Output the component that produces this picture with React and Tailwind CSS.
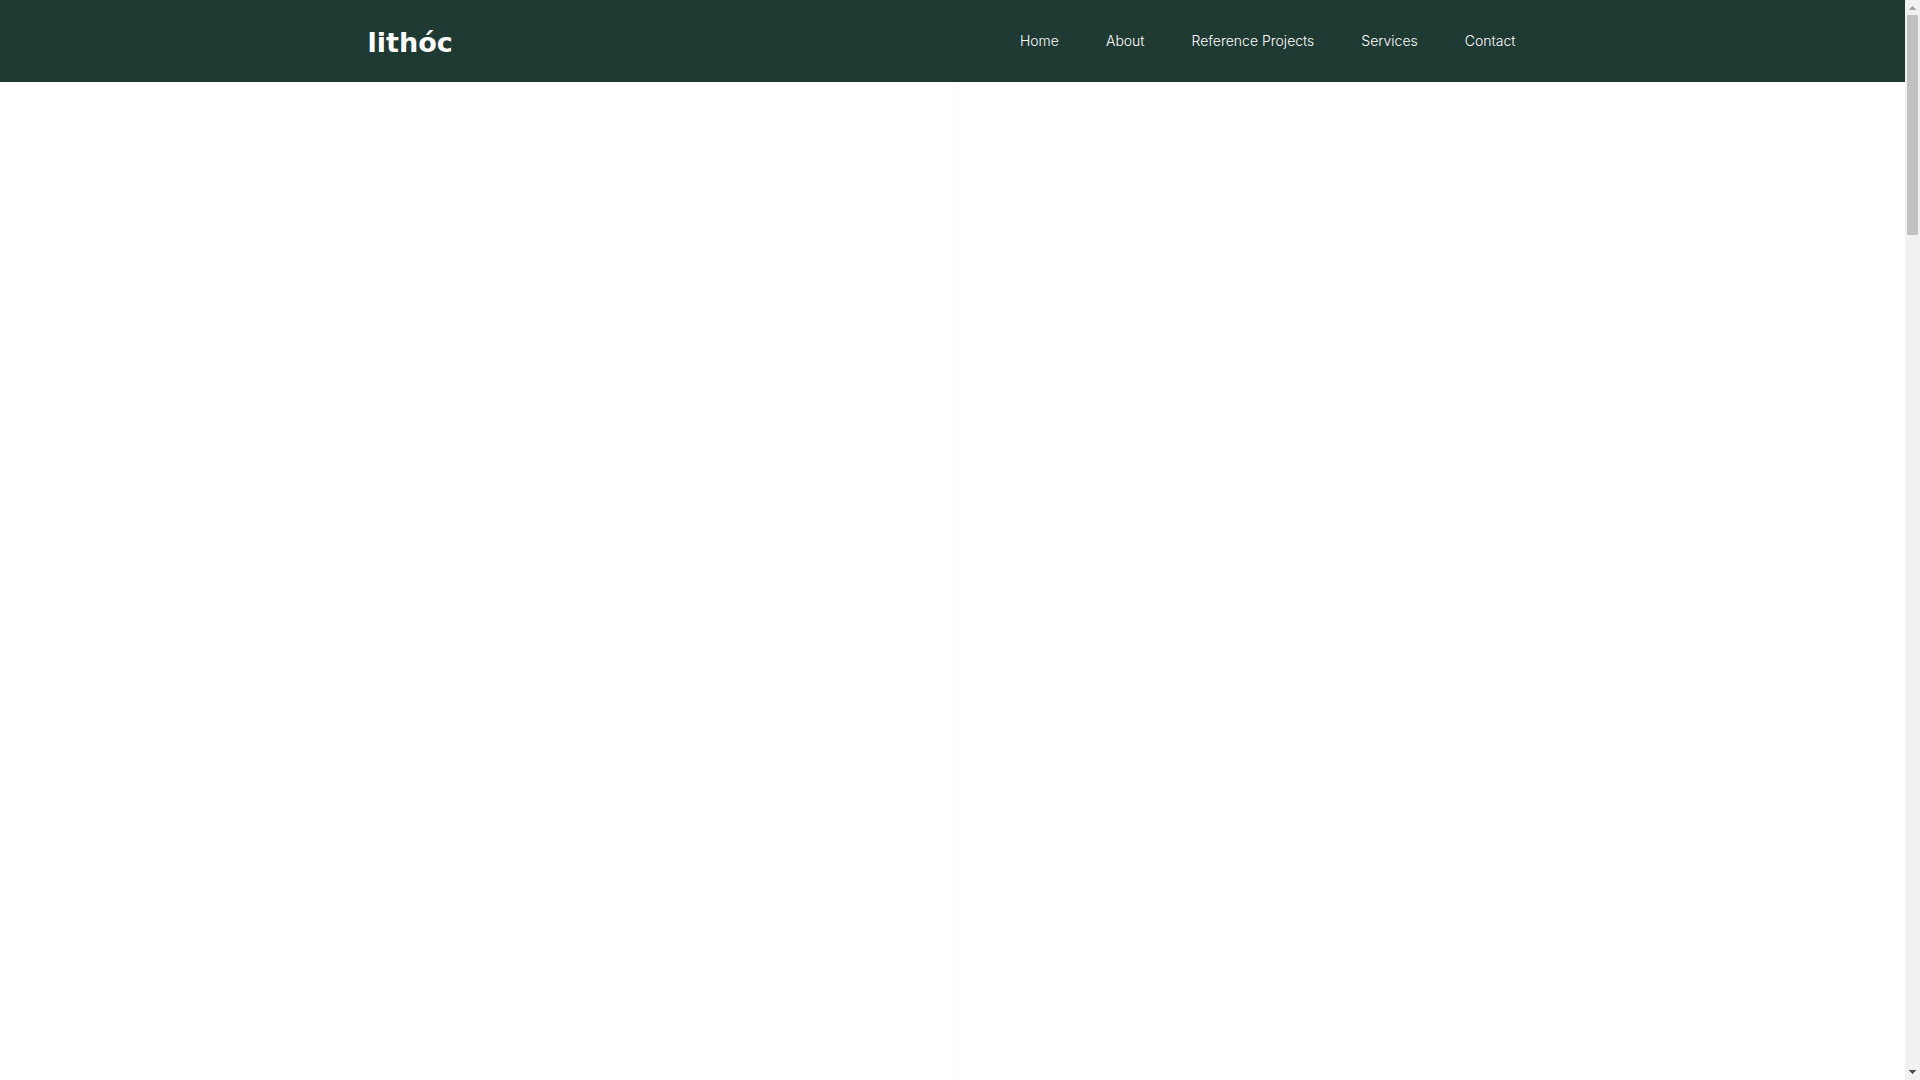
import React from 'react'

const navigation = [
  { name: 'Home', href: '#home' },
  { name: 'About', href: '#about' },
  { name: 'Reference Projects', href: '#projects' },
  { name: 'Services', href: '#services' },
  { name: 'Contact', href: '#contact' },
]

function Header() {
  return (
    <header className="bg-[#1f3933] border-b border-[#1b302c]">
      <div className="flex items-center justify-between w-full max-w-[1170px] mx-auto h-[81px] pr-[22px]">
        <a
          href="#home"
          className="pt-1 font-['DejaVu_Sans',sans-serif] font-bold text-[27px] leading-8 text-white"
        >
          lithóc
        </a>

        <nav className="flex items-center gap-[47px]">
          {navigation.map((item) => (
            <a key={item.name} href={item.href} className="text-sm font-light text-white">
              {item.name}
            </a>
          ))}
        </nav>
      </div>
    </header>
  )
}

function ScrollRail() {
  return (
    <div className="flex flex-col items-center w-[15px] bg-[#f1f1f1]" aria-hidden="true">
      <svg className="w-[15px] h-[15px]" viewBox="0 0 15 15" shapeRendering="crispEdges">
        <path d="M4 10V9h1V8h1V7h1V6h1v1h1v1h1v1h1v1z" fill="#a3a3a3" />
      </svg>
      <div className="w-[11px] h-[220px] bg-[#c1c1c1]" />
      <svg className="w-[15px] h-[15px] mt-auto" viewBox="0 0 15 15" shapeRendering="crispEdges">
        <path d="M4 5v1h1v1h1v1h1v1h1V8h1V7h1V6h1V5z" fill="#505050" />
      </svg>
    </div>
  )
}

function App() {
  return (
    <div className="flex h-screen bg-white font-['Inter',sans-serif]">
      <div className="flex-1 flex flex-col overflow-hidden">
        <Header />

        {/* Main content */}
        <main className="flex-1 grid grid-cols-2">
          <div className="border-r border-[#fafafa]" />
          <div />
        </main>
      </div>

      <ScrollRail />
    </div>
  )
}

export default App
